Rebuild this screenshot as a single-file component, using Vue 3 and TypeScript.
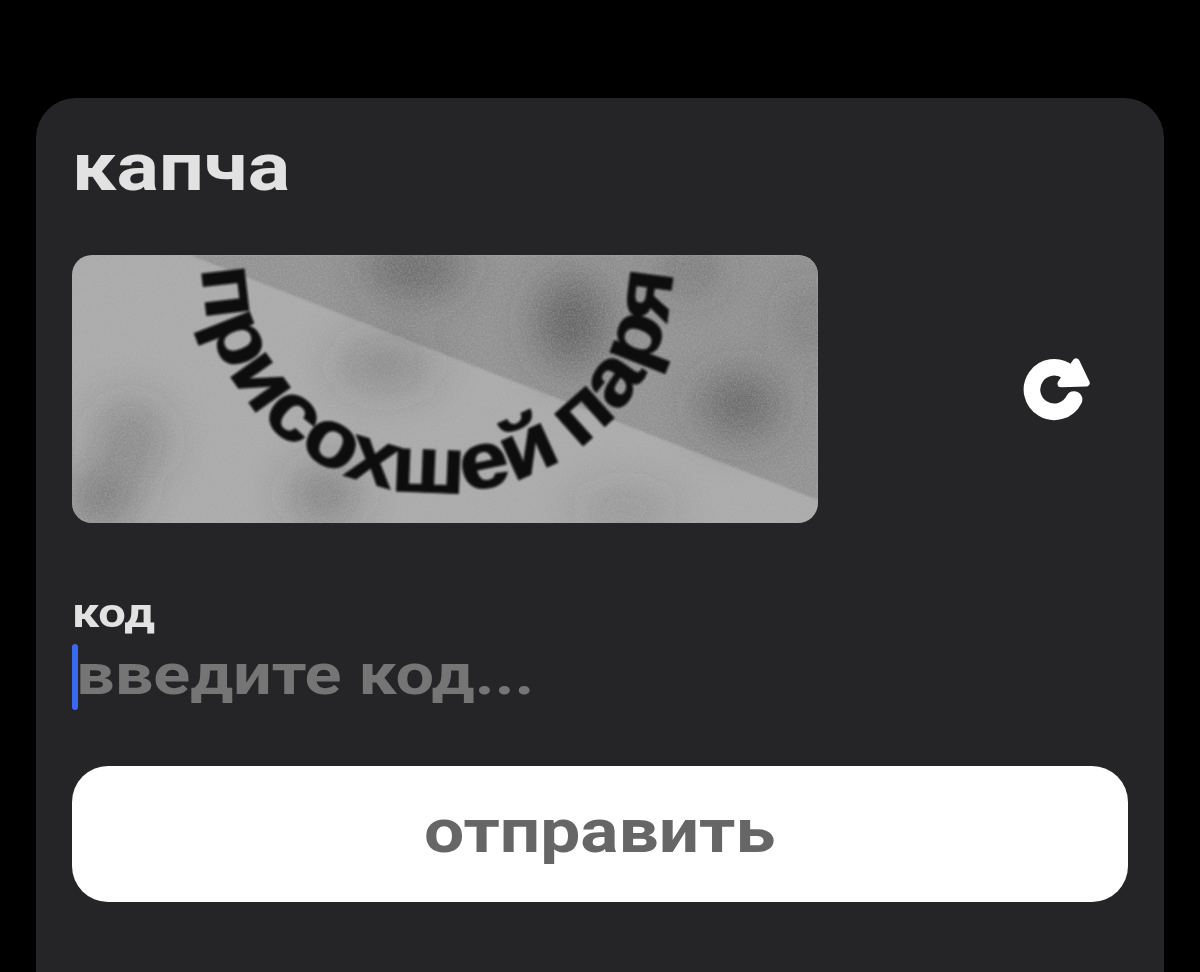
<script setup lang="ts">
const blobs = [
  { x: 740, y: 405, rx: 40, ry: 30, o: 0.55 },
  { x: 572, y: 322, rx: 34, ry: 46, o: 0.6 },
  { x: 415, y: 268, rx: 50, ry: 28, o: 0.5 },
  { x: 385, y: 365, rx: 50, ry: 26, o: 0.3 },
  { x: 130, y: 440, rx: 36, ry: 40, o: 0.3 },
  { x: 100, y: 500, rx: 36, ry: 24, o: 0.5 },
  { x: 325, y: 495, rx: 34, ry: 28, o: 0.4 },
  { x: 625, y: 510, rx: 50, ry: 18, o: 0.25 },
  { x: 690, y: 270, rx: 35, ry: 25, o: 0.3 },
  { x: 810, y: 320, rx: 30, ry: 40, o: 0.2 },
]
</script>

<template>
  <main class="screen">
    <section class="card">
      <h1 class="title"><span class="wide">капча</span></h1>
      <div class="captcha-row">
        <svg class="captcha" viewBox="72 255 746 268" role="img" aria-label="капча">
          <defs>
            <filter id="soft" x="-50%" y="-50%" width="200%" height="200%">
              <feGaussianBlur stdDeviation="22" />
            </filter>
            <filter id="ink" x="-10%" y="-10%" width="120%" height="120%">
              <feGaussianBlur stdDeviation="1.1" />
            </filter>
            <filter id="edge" x="-5%" y="-5%" width="110%" height="110%">
              <feGaussianBlur stdDeviation="1.2" />
            </filter>
            <filter id="grain" x="0" y="0" width="100%" height="100%">
              <feTurbulence type="fractalNoise" baseFrequency="0.55" numOctaves="2" seed="4" />
              <feColorMatrix
                type="matrix"
                values="0 0 0 0 0.5  0 0 0 0 0.5  0 0 0 0 0.5  0.45 0.45 0 0 -0.34"
              />
            </filter>
          </defs>
          <rect x="72" y="255" width="746" height="268" fill="#ababab" />
          <polygon points="190,255 818,255 818,500" fill="#929292" filter="url(#edge)" />
          <g filter="url(#soft)">
            <ellipse
              v-for="(b, i) in blobs"
              :key="i"
              :cx="b.x"
              :cy="b.y"
              :rx="b.rx"
              :ry="b.ry"
              fill="#3a3a3a"
              :opacity="b.o"
            />
          </g>
          <rect x="72" y="255" width="746" height="268" filter="url(#grain)" />
          <path id="arc" d="M 203 268 A 234 222 0 0 0 672 272" fill="none" />
          <text class="captcha-text" filter="url(#ink)">
            <textPath href="#arc" textLength="718" lengthAdjust="spacingAndGlyphs">присохшей паря</textPath>
          </text>
        </svg>
        <button class="refresh" type="button" aria-label="обновить">
          <svg class="refresh-icon" viewBox="68 50 202 196">
            <path
              d="M 204 96 A 67 67 0 1 0 222 178"
              fill="none"
              stroke="#fff"
              stroke-width="50"
              stroke-linecap="round"
            />
            <polygon
              points="228,65 258,128 183,130"
              fill="#fff"
              stroke="#fff"
              stroke-width="22"
              stroke-linejoin="round"
            />
          </svg>
        </button>
      </div>
      <label class="label" for="code"><span class="wide">код</span></label>
      <div class="field">
        <span class="caret"></span>
        <span class="placeholder wide">введите код...</span>
      </div>
      <button class="submit" type="button"><span class="wide">отправить</span></button>
    </section>
  </main>
</template>

<style>
html,
body {
  margin: 0;
  background: #000;
}
</style>

<style scoped>
.screen {
  height: 972px;
  box-sizing: border-box;
  padding: 98px 36px 0;
  overflow: hidden;
  background: #000;
  font-family: Roboto, "Liberation Sans", sans-serif;
}
.card {
  height: 920px;
  box-sizing: border-box;
  padding: 36px;
  background: #252527;
  border-radius: 40px;
  display: flex;
  flex-direction: column;
  align-items: flex-start;
}
.wide {
  display: inline-block;
  white-space: nowrap;
  transform-origin: left center;
}
.title {
  margin: 0;
  height: 121px;
  font-size: 66px;
  line-height: 68px;
  font-weight: 700;
  color: #e2e2e2;
}
.title .wide {
  transform: scaleX(1.2);
}
.captcha-row {
  width: 100%;
  display: flex;
  align-items: center;
  justify-content: space-between;
}
.captcha {
  width: 746px;
  height: 268px;
  border-radius: 20px;
  display: block;
}
.captcha-text {
  font-family: "Liberation Sans", sans-serif;
  font-weight: 700;
  font-size: 80px;
  word-spacing: -6px;
  fill: #0a0a0a;
  stroke: #0a0a0a;
  stroke-width: 1.2px;
}
.refresh {
  width: 144px;
  height: 144px;
  padding: 0;
  border: 0;
  background: none;
  display: flex;
  align-items: center;
  justify-content: center;
}
.refresh-icon {
  width: 67px;
  height: 65px;
}
.label {
  margin-top: 68px;
  height: 53px;
  font-size: 40px;
  line-height: 46px;
  font-weight: 700;
  color: #e2e2e2;
}
.label .wide {
  transform: scaleX(1.22);
}
.field {
  display: flex;
  align-items: center;
  height: 66px;
}
.caret {
  width: 6px;
  height: 66px;
  border-radius: 3px;
  background: #3f66f2;
}
.placeholder {
  margin-bottom: 6px;
  margin-left: -2px;
  font-size: 58px;
  line-height: 60px;
  font-weight: 700;
  color: #757575;
  transform: scaleX(1.18);
}
.submit {
  margin-top: 56px;
  width: 100%;
  height: 136px;
  border: 0;
  border-radius: 36px;
  background: #fff;
  color: #666;
  font-family: inherit;
  font-size: 62px;
  font-weight: 700;
  display: flex;
  align-items: center;
  justify-content: center;
}
.submit .wide {
  margin-bottom: 8px;
  transform: scaleX(1.15);
  transform-origin: center center;
}
</style>
